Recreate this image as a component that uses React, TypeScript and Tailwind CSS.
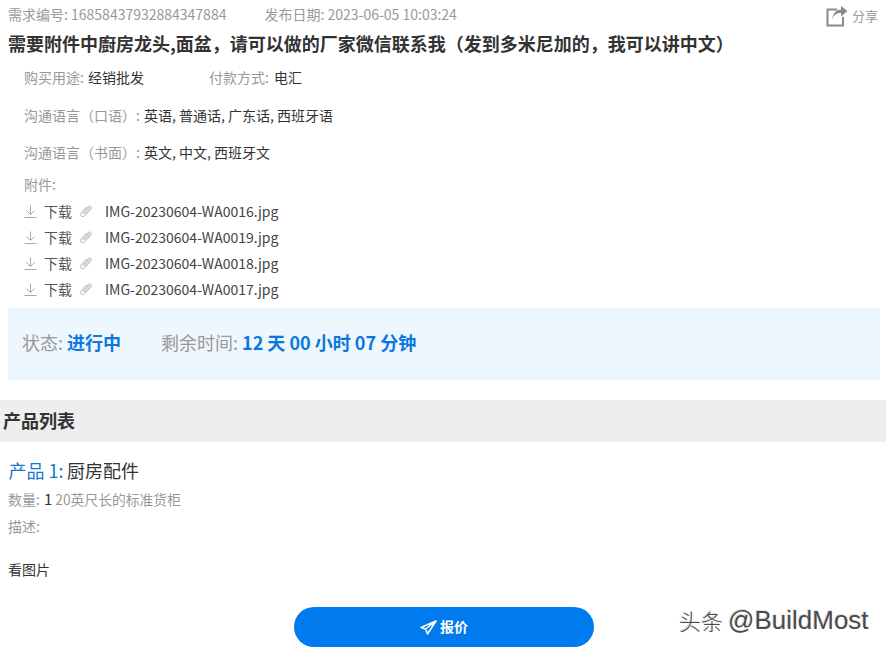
import React from "react";

function DownloadIcon() {
  return (
    <svg width="13" height="13" viewBox="0 0 13 13" fill="none" stroke="#aaa" strokeWidth="1">
      <path d="M6.500 0.500v8.500M2.500 5.500l4 4 4-4M0.500 12.500h12" />
    </svg>
  );
}

function ClipIcon() {
  return (
    <svg width="14" height="14" viewBox="0 0 14 14" fill="none" stroke="#b0b0b0" strokeWidth="0.900">
      <path d="M3.500 9.500 9.500 2.500c1-1.200 3-.2 3 1.200 0 .6-.3 1.100-.7 1.500L5.500 12c-1.200 1.300-3.800.5-4-1.300-.1-.8.200-1.400.7-2L7.500 2.800M5.800 10.300l5-5.800c.5-.7-.5-1.500-1.100-.9L4 10" />
    </svg>
  );
}

function ShareIcon() {
  return (
    <svg width="22" height="21" viewBox="0 0 22 21" fill="none">
      <path d="M11 3.500H1.500v16h15.500v-8.500" stroke="#8a8a8a" strokeWidth="2" />
      <path d="M6 14.500c.8-5 4-7.500 9-7.500V10.500L21.500 5 15 0v3.500C10 3.500 6.500 8 6 14.500z" fill="#8a8a8a" />
    </svg>
  );
}

function SendIcon() {
  return (
    <svg width="17" height="15" viewBox="0 0 17 15" fill="none" stroke="#fff" strokeWidth="1.500" strokeLinejoin="round">
      <path d="M16 1 1 7.500l4.500 1.500 2 5 8.500-13zM5.500 9 16 1M7.500 14l1.500-3" />
    </svg>
  );
}

const files = ["IMG-20230604-WA0016.jpg", "IMG-20230604-WA0019.jpg", "IMG-20230604-WA0018.jpg", "IMG-20230604-WA0017.jpg"];

export default function App() {
  return (
    <div className="w-[886px] h-[651px] overflow-hidden bg-white relative font-['Noto_Sans_CJK_SC','Noto_Sans',sans-serif] text-[#333]">
      <div className="flex justify-between pl-2 pr-[6px] h-[28px] items-center text-[14px] text-[#999]">
        <div className="flex gap-[38px]">
          <span>需求编号: 16858437932884347884</span>
          <span>发布日期: 2023-06-05 10:03:24</span>
        </div>
        <div className="flex items-center gap-[4px] text-[13px] mt-[4px] mr-[1px]">
          <ShareIcon />
          <span className="-mt-[1px] mr-[1px]">分享</span>
        </div>
      </div>
      <h1 className="pl-2 h-[30px] leading-[30px] text-[18px] font-bold text-[#333]">
        需要附件中廚房龙头,面盆，请可以做的厂家微信联系我（发到多米尼加的，我可以讲中文）
      </h1>
      <div className="pl-6 text-[14px]">
        <div className="flex h-[38px] items-center">
          <span className="w-[185px]">
            <span className="text-[#999]">购买用途: </span>
            <span className="ml-[1px]">经销批发</span>
          </span>
          <span>
            <span className="text-[#999]">付款方式: </span>
            <span className="ml-[2px]">电汇</span>
          </span>
        </div>
        <div className="h-[38px] flex items-center">
          <span className="text-[#999]">沟通语言（口语）: </span>
          <span className="ml-[4px]">英语, 普通话, 广东话, 西班牙语</span>
        </div>
        <div className="h-[37px] flex items-center">
          <span className="text-[#999]">沟通语言（书面）: </span>
          <span className="ml-[4px]">英文, 中文, 西班牙文</span>
        </div>
        <div className="h-[27px] flex items-center text-[#999]">附件:</div>
        <div className="flex flex-col">
          {files.map((f) => (
            <div key={f} className="h-[26px] flex items-center">
              <DownloadIcon />
              <span className="ml-[7px] w-[35px] text-[#555]">下载</span>
              <ClipIcon />
              <span className="ml-[12px] text-[#444]">{f}</span>
            </div>
          ))}
        </div>
      </div>
      <div className="ml-2 mr-[6px] mt-[6px] h-[72px] bg-[#eef6fe] flex items-center pl-[14px] pb-[4px] text-[18px] font-bold text-[#0a78dc]">
        <span className="w-[139px]">
          <span className="text-[#999] font-normal">状态: </span>进行中
        </span>
        <span>
          <span className="text-[#999] font-normal">剩余时间: </span>12 天 00 小时 07 分钟
        </span>
      </div>
      <div className="mt-[20px] h-[42px] bg-[#eeeeee] flex items-center pl-[3px] pb-[2px] text-[18px] font-bold text-[#333]">产品列表</div>
      <div className="pl-2">
        <div className="mt-[13px] h-[30px] flex items-center text-[18px]">
          <span className="text-[#1677c9] ml-[0.500px]">产品 1: </span>
          <span className="ml-[3.500px] text-[#333]">厨房配件</span>
        </div>
        <div className="h-[28px] flex items-center text-[14px] text-[#999]">
          数量:<span className="text-[#333] ml-[4px] text-[15px]">1</span>
          <span className="ml-[3px] text-[13.800px]">20英尺长的标准货柜</span>
        </div>
        <div className="h-[26px] flex items-center text-[14px] text-[#999]">描述:</div>
        <div className="mt-[17px] h-[26px] flex items-center text-[14px] text-[#333]">看图片</div>
      </div>
      <div className="mt-[25px] flex pl-[294px]">
        <button className="w-[300px] h-[40px] rounded-[20px] bg-[#007bed] text-white flex items-center justify-center gap-[3px] text-[14px] font-bold">
          <SendIcon />
          <span className="-mt-[2px]">报价</span>
        </button>
      </div>
      <div className="absolute left-[679px] top-[602px] flex items-center gap-[5px] h-[36px] text-[#4a4a4a] [text-shadow:1px_1px_0_#fff,-1px_-1px_0_#ddd]">
        <span className="text-[22px] font-['Noto_Sans_CJK_SC',sans-serif] font-light">头条</span>
        <span className="text-[26px] font-['Liberation_Sans',sans-serif]">@BuildMost</span>
      </div>
    </div>
  );
}
